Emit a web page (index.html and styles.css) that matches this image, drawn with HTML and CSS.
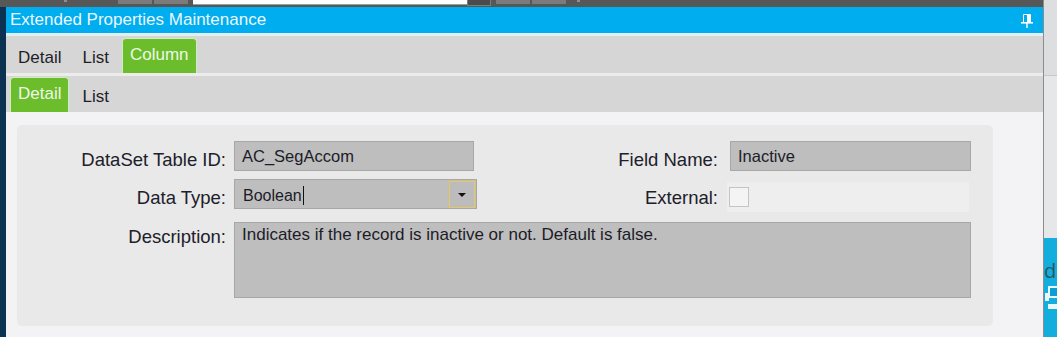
FILE: index.html
```html
<!DOCTYPE html>
<html lang="en">
<head>
    <meta charset="UTF-8">
    <meta name="viewport" content="width=device-width, initial-scale=1.0">
    <title>Extended Properties Maintenance</title>
    <link rel="stylesheet" href="styles.css">
</head>
<body>
    <div class="screen">
        <div class="app">
            <!-- host toolbar, mostly cut off at the top -->
            <div class="topbar">
                <span class="tb-mark tb-mark-first"></span>
                <span class="tb-btn tb-btn-first"></span>
                <span class="tb-btn"></span>
                <span class="tb-input"></span>
                <span class="tb-drop"></span>
                <span class="tb-btn tb-btn-gap"></span>
                <span class="tb-btn"></span>
                <span class="tb-mark tb-mark-last"></span>
            </div>

            <div class="frame">
                <div class="edge"></div>
                <div class="window">
                    <div class="titlebar">
                        <span class="title">Extended Properties Maintenance</span>
                        <svg class="pin" width="12" height="14" viewBox="0 0 12 14">
                            <path d="M2.5 0.5h7v8h-7z" fill="none" stroke="#fff" stroke-width="1"/>
                            <rect x="6" y="1" width="3" height="7" fill="#fff"/>
                            <rect x="0" y="8" width="12" height="1.6" fill="#fff"/>
                            <rect x="5.3" y="9" width="1.4" height="5" fill="#fff"/>
                        </svg>
                    </div>

                    <div class="tabs tabs-main">
                        <div class="tab">Detail</div>
                        <div class="tab">List</div>
                        <div class="tab active">Column</div>
                    </div>

                    <div class="tabs tabs-sub">
                        <div class="tab active">Detail</div>
                        <div class="tab">List</div>
                    </div>

                    <div class="content">
                        <div class="panel">
                            <label class="field-label">DataSet Table ID:</label>
                            <div class="input">AC_SegAccom</div>
                            <label class="field-label field-label-right">Field Name:</label>
                            <div class="input input-wide">Inactive</div>

                            <label class="field-label">Data Type:</label>
                            <div class="select">
                                <span class="select-value">Boolean<span class="caret"></span></span>
                                <span class="select-btn"><span class="arrow"></span></span>
                            </div>
                            <label class="field-label field-label-right">External:</label>
                            <div class="check-cell"><span class="checkbox"></span></div>

                            <label class="field-label desc-label">Description:</label>
                            <div class="textarea">Indicates if the record is inactive or not. Default is false.</div>
                        </div>
                    </div>
                </div>
            </div>
        </div>

        <!-- neighbouring window peeking in on the right -->
        <div class="side">
            <div class="side-top"></div>
            <div class="side-mid"></div>
            <div class="side-bottom">
                <span class="side-text">d</span>
                <svg class="side-icon" width="13" height="44" viewBox="0 0 13 44">
                    <path d="M4 6h9v12H4z M1 13h4v8H1z M4 24h9v5H4z" fill="#eaf8fd"/>
                    <path d="M6 8h7v8H6z" fill="#0c9fd4"/>
                </svg>
            </div>
        </div>
    </div>
</body>
</html>
```

FILE: styles.css
```css
body {
    margin: 0;
    font-family: "Liberation Sans", Arial, sans-serif;
    background-color: #f3f3f5;
}
.screen {
    display: flex;
    width: 1057px;
    height: 337px;
    overflow: hidden;
}
.app {
    width: 1043px;
    flex-shrink: 0;
    display: flex;
    flex-direction: column;
}

/* top toolbar stub */
.topbar {
    height: 7px;
    background-color: #575757;
    display: flex;
    align-items: flex-start;
}
.topbar span {
    display: block;
    height: 4px;
}
.tb-mark {
    width: 3px;
    height: 2px !important;
    background-color: #8f8f8f;
}
.tb-mark-first {
    margin-left: 64px;
}
.tb-mark-last {
    margin-left: 11px;
}
.tb-btn {
    width: 34px;
    margin-left: 2px;
    background-color: #7b7b7b;
}
.tb-btn-first {
    margin-left: 51px;
}
.tb-btn-gap {
    margin-left: 5px;
}
.tb-input {
    width: 274px;
    margin-left: 5px;
    background-color: #fff;
    border-bottom: 1px solid #9c9c9c;
}
.tb-drop {
    width: 22px;
    height: 5px !important;
    background-color: #4b4b4b;
    border: 1px solid #7c7c7c;
    border-top: 0;
}

.frame {
    flex: 1;
    display: flex;
}
.edge {
    width: 6px;
    background-color: #0b3250;
}
.window {
    flex: 1;
    display: flex;
    flex-direction: column;
}

.titlebar {
    height: 26px;
    background-color: #00adef;
    border-bottom: 3px solid #e2eef3;
    display: flex;
    align-items: center;
    padding: 0 10px 0 4px;
}
.title {
    flex: 1;
    font-size: 17px;
    line-height: 26px;
    color: #eaf7fd;
}
.pin {
    display: block;
    margin-top: 1px;
}

.tabs {
    display: flex;
    align-items: flex-end;
    gap: 5px;
    padding-left: 4px;
    background-color: #d6d6d6;
}
.tabs-main {
    height: 37px;
    border-bottom: 3px solid #ececec;
}
.tabs-sub {
    height: 36px;
}
.tab {
    box-sizing: border-box;
    height: 35px;
    padding: 10px 8px 0;
    font-size: 17px;
    line-height: 20px;
    color: #1e1e28;
}
.tab.active {
    padding: 6px 7px 0;
    background-color: #6bbd2c;
    border: 1px solid #d2ebbf;
    border-bottom: 0;
    border-radius: 4px 4px 0 0;
    color: #eef8e6;
}

.content {
    flex: 1;
    padding: 13px 0 0 11px;
}
.panel {
    box-sizing: border-box;
    width: 976px;
    height: 201px;
    padding: 16px 22px 0 0;
    background-color: #e9e9e9;
    border-radius: 5px;
    display: grid;
    grid-template-columns: 209px 243px 1fr 241px;
    grid-template-rows: 30px 30px 81px;
    column-gap: 8px;
    row-gap: 8px;
}
.field-label {
    box-sizing: border-box;
    height: 30px;
    padding-top: 4px;
    text-align: right;
    font-size: 18.5px;
    line-height: 30px;
    color: #20202a;
    white-space: nowrap;
}
.field-label-right {
    padding-right: 4px;
}
.desc-label {
    margin-top: 5px;
    padding-top: 0;
}

.input, .select, .textarea {
    box-sizing: border-box;
    background-color: #bebebe;
    border: 1px solid #a7a7a7;
    font-size: 16.5px;
    color: #1c1c28;
}
.input {
    width: 240px;
    height: 30px;
    padding: 0 7px;
    line-height: 28px;
}
.input-wide {
    width: 241px;
}
.select {
    width: 243px;
    height: 30px;
    display: flex;
    align-items: flex-start;
}
.select-value {
    flex: 1;
    padding: 6px 8px 0;
    line-height: 18px;
    font-size: 16px;
}
.caret {
    display: inline-block;
    width: 1px;
    height: 19px;
    margin-left: 1px;
    vertical-align: -4px;
    background-color: #111;
}
.select-btn {
    box-sizing: border-box;
    flex: 0 0 26px;
    height: 27px;
    margin: 1px 1px 0 0;
    border: 1px solid #e6c95a;
    background-color: #bcbcbc;
    display: flex;
    align-items: center;
    justify-content: center;
}
.arrow {
    width: 0;
    height: 0;
    border-left: 4px solid transparent;
    border-right: 4px solid transparent;
    border-top: 4px solid #111;
}
.check-cell {
    box-sizing: border-box;
    height: 30px;
    margin: 3px 2px 0 -3px;
    padding: 5px 0 0 2px;
    background-color: #eeeeee;
}
.checkbox {
    display: block;
    box-sizing: border-box;
    width: 20px;
    height: 20px;
    border: 1px solid #c4c4c4;
    background-color: #f4f4f4;
}
.textarea {
    grid-column: 2 / 5;
    margin-top: 5px;
    padding: 3px 7px;
    font-size: 17px;
    line-height: 18px;
}

/* right strip */
.side {
    flex: 1;
    min-width: 0;
    display: flex;
    flex-direction: column;
    border-left: 1px solid #8c8c8c;
}
.side-top {
    height: 75px;
    background-color: #dcdee0;
    border-bottom: 1px solid #c6c8ca;
}
.side-mid {
    height: 162px;
    background-color: #e5e7e9;
}
.side-bottom {
    flex: 1;
    background-color: #13aedd;
    overflow: hidden;
}
.side-text {
    display: block;
    margin-top: 22px;
    font-family: "Open Sans", sans-serif;
    font-size: 20px;
    line-height: 22px;
    color: #2c5560;
    white-space: nowrap;
}
.side-icon {
    display: block;
    margin-top: -2px;
}
```
